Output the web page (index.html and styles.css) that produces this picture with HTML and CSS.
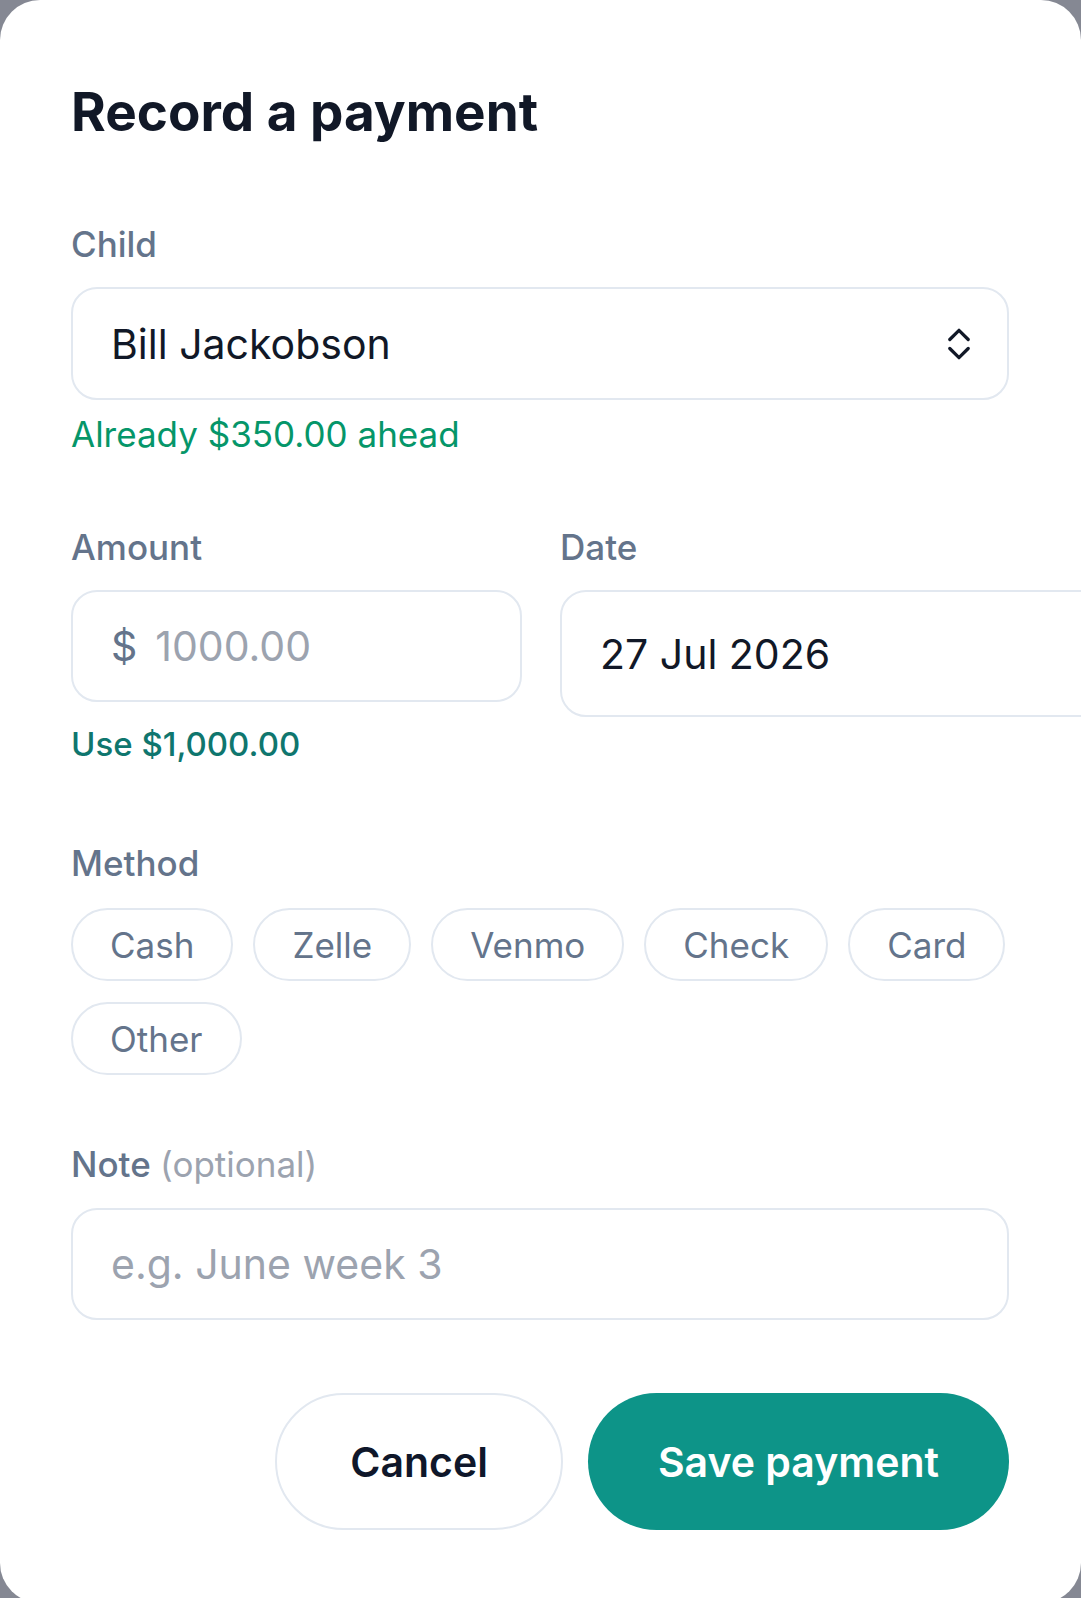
FILE: index.html
```html
<!DOCTYPE html>
<html lang="en">
<head>
    <meta charset="UTF-8">
    <meta name="viewport" content="width=device-width, initial-scale=1.0">
    <title>Record a payment</title>
    <link rel="stylesheet" href="styles.css">
</head>
<body>
    <div class="sheet">
        <h1 class="sheet-title">Record a payment</h1>

        <div class="field">
            <div class="field-label">Child</div>
            <div class="box select-box">
                <span class="value">Bill Jackobson</span>
                <svg class="chevrons" width="22" height="32" viewBox="0 0 22 32">
                    <path d="M1.8 11.5 L11 2.3 L20.2 11.5"/>
                    <path d="M1.8 20.5 L11 29.7 L20.2 20.5"/>
                </svg>
            </div>
            <p class="hint hint-ahead">Already $350.00 ahead</p>
        </div>

        <div class="field-row">
            <div class="field amount-col">
                <div class="field-label">Amount</div>
                <div class="box">
                    <span class="prefix">$</span><span class="placeholder">1000.00</span>
                </div>
                <div class="use-link">Use $1,000.00</div>
            </div>
            <div class="field date-col">
                <div class="field-label">Date</div>
                <div class="box date-box"><span class="value">27 Jul 2026</span></div>
            </div>
        </div>

        <div class="field method-field">
            <div class="field-label">Method</div>
            <div class="chips">
                <span class="chip">Cash</span>
                <span class="chip">Zelle</span>
                <span class="chip">Venmo</span>
                <span class="chip">Check</span>
                <span class="chip">Card</span>
                <span class="chip">Other</span>
            </div>
        </div>

        <div class="field note-field">
            <div class="field-label">Note <span class="optional">(optional)</span></div>
            <div class="box"><span class="placeholder">e.g. June week 3</span></div>
        </div>

        <div class="actions">
            <button class="btn btn-cancel">Cancel</button>
            <button class="btn btn-save">Save payment</button>
        </div>
    </div>
</body>
</html>
```

FILE: styles.css
```css
html, body { margin: 0; height: 100%; }
body {
    background: #858893;
    font-family: Inter, "Liberation Sans", sans-serif;
    overflow: hidden;
}

.sheet {
    box-sizing: border-box;
    height: 1603px;
    background: #ffffff;
    border-radius: 40px;
    padding: 80px 72px 0 71px;
    overflow: hidden;
}

.sheet-title {
    margin: 0 0 73px;
    font-size: 53px;
    line-height: 65px;
    font-weight: 700;
    color: #111827;
}

.field-label {
    font-size: 35px;
    line-height: 52px;
    font-weight: 500;
    color: #64748b;
    margin-bottom: 17px;
}
.field-label .optional { color: #9ca3af; font-weight: 400; }

.box {
    box-sizing: border-box;
    height: 113px;
    border: 2px solid #e2e8f0;
    border-radius: 26px;
    padding: 0 37px 0 38px;
    display: flex;
    align-items: center;
    font-size: 41px;
    color: #111827;
}
.box .value { flex: 1; }
.chevrons { fill: none; stroke: #111827; stroke-width: 3.2; stroke-linecap: round; stroke-linejoin: round; }

.prefix { color: #64748b; margin-right: 18px; }
.placeholder { color: #9ca3af; }

.hint {
    margin: 8px 0 0;
    font-size: 35px;
    line-height: 52px;
}
.hint-ahead { color: #059669; }

.field-row {
    display: flex;
    gap: 38px;
    margin-top: 61px;
}
.amount-col { width: 451px; flex: none; }
.amount-col .box { height: 112px; }
.date-col { width: 560px; flex: none; }
.date-box { height: 127px; }

.use-link {
    margin-top: 16px;
    font-size: 33px;
    line-height: 52px;
    font-weight: 500;
    color: #0f766e;
}

.method-field { margin-top: 67px; }
.chips {
    display: flex;
    flex-wrap: wrap;
    gap: 21px 20px;
    margin-top: 19px;
}
.chip {
    box-sizing: border-box;
    height: 73px;
    padding: 0 37px;
    border: 2px solid #e2e8f0;
    border-radius: 40px;
    display: flex;
    align-items: center;
    font-size: 35px;
    color: #64748b;
}

.note-field { margin-top: 63px; }
.note-field .field-label { margin-bottom: 18px; }
.note-field .box { height: 112px; }

.actions {
    display: flex;
    justify-content: flex-end;
    gap: 25px;
    margin-top: 73px;
}
.btn {
    height: 137px;
    padding: 0 73px;
    border-radius: 70px;
    font-family: inherit;
    font-size: 41px;
    font-weight: 600;
}
.btn-cancel { background: #ffffff; border: 2px solid #e2e8f0; color: #0f172a; }
.btn-save { background: #0d9488; border: none; color: #ffffff; padding: 0 70px; }
```
